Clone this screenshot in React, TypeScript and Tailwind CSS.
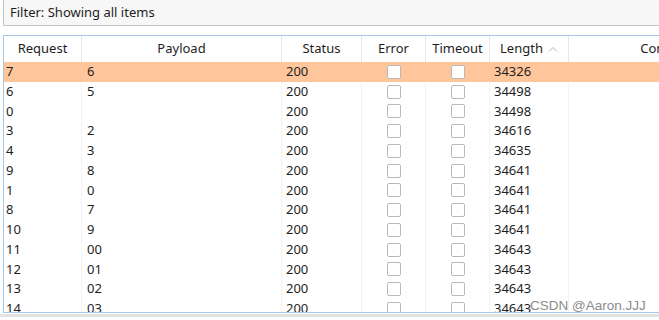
import React from "react";

const rows: [string, string, string][] = [
  ["7", "6", "34326"],
  ["6", "5", "34498"],
  ["0", "", "34498"],
  ["3", "2", "34616"],
  ["4", "3", "34635"],
  ["9", "8", "34641"],
  ["1", "0", "34641"],
  ["8", "7", "34641"],
  ["10", "9", "34641"],
  ["11", "00", "34643"],
  ["12", "01", "34643"],
  ["13", "02", "34643"],
  ["14", "03", "34643"],
];

const cols = "grid grid-cols-[78px_200px_80px_64px_64px_79px_204px]";

function Checkbox() {
  return <div className="w-[14px] h-[14px] rounded-[2px] border border-[#b9b9b9] bg-white" />;
}

function HeaderCell({ children }: { children: React.ReactNode }) {
  return (
    <div className="flex items-center justify-center border-r border-[#e8e8e8] whitespace-nowrap">
      {children}
    </div>
  );
}

export default function App() {
  return (
    <div
      className="relative w-[659px] h-[320px] overflow-hidden bg-white text-[13px] text-[#1e1e1e]"
      style={{ fontFamily: '"Noto Sans", "Open Sans", sans-serif' }}
    >
      {/* filter bar */}
      <div className="ml-[3px] h-[26px] flex items-center pl-[6px] bg-[#f7f7f7] border-l border-b border-[#c4c4c4]">
        Filter: Showing all items
      </div>

      {/* results table */}
      <div className="mt-[9px] ml-[3px] h-[278px] overflow-hidden border-t border-l border-b border-[#a4c8ec]">
        <div className={`${cols} h-[26px] bg-white`}>
          <HeaderCell>Request</HeaderCell>
          <HeaderCell>Payload</HeaderCell>
          <HeaderCell>Status</HeaderCell>
          <HeaderCell>Error</HeaderCell>
          <HeaderCell>Timeout</HeaderCell>
          <HeaderCell>
            Length
            <svg width="10" height="6" viewBox="0 0 10 6" className="ml-[5px]">
              <path d="M1 5.5 L5 1.5 L9 5.5" fill="none" stroke="#b4b4b4" strokeWidth="1" />
            </svg>
          </HeaderCell>
          <HeaderCell>Comment</HeaderCell>
        </div>
        {rows.map(([req, payload, len], i) => {
          const line = i === 0 ? "" : "border-r border-[#f3f3f3]";
          return (
            <div
              key={i}
              className={`${cols} h-[19.75px] leading-[19.75px] ${i === 0 ? "bg-[#ffc69b]" : "bg-white"}`}
            >
              <div className={`pl-[2px] ${line}`}>{req}</div>
              <div className={`pl-[5px] ${line}`}>{payload}</div>
              <div className={`pl-[4px] ${line}`}>200</div>
              <div className={`flex items-center justify-center ${line}`}>
                <Checkbox />
              </div>
              <div className={`flex items-center justify-center ${line}`}>
                <Checkbox />
              </div>
              <div className={`pl-[4px] ${line}`}>{len}</div>
              <div />
            </div>
          );
        })}
      </div>
      <div className="mt-[1px] h-[3px] bg-[#e3e3e3]" />

      {/* watermark */}
      <div
        className="absolute left-[530px] top-[296px] text-[13.5px] text-[#8c8c8c] whitespace-nowrap"
        style={{ fontFamily: '"Liberation Sans", Arial, sans-serif' }}
      >
        CSDN @Aaron.JJJ
      </div>
    </div>
  );
}
